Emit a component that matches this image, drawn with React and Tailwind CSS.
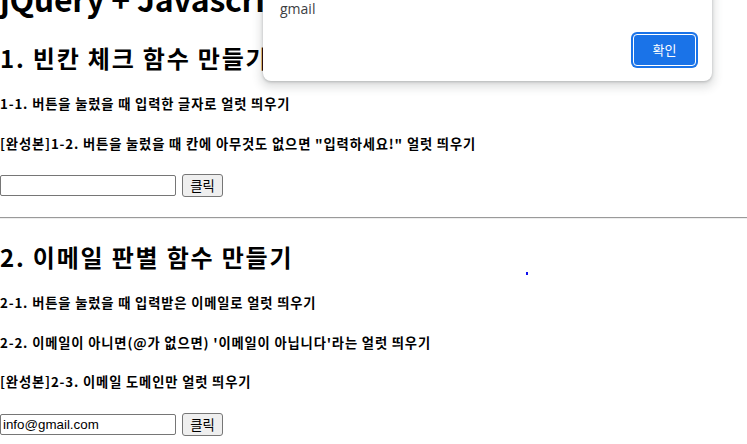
import React from "react";

const kr = { fontFamily: '"Noto Sans CJK KR", "Noto Sans", sans-serif' };

function H5({ children, className = "" }) {
  return (
    <h5 className={"text-[13.28px] leading-[18px] font-bold tracking-[0.85px] text-black whitespace-nowrap " + className}>
      {children}
    </h5>
  );
}

function InputRow({ value, className = "" }) {
  return (
    <div className={"flex items-center gap-[6px] h-[23px] " + className}>
      <input
        readOnly
        value={value}
        className="w-[176px] h-[21px] border border-[#767676] rounded-[2px] px-[2px] text-[13.33px] text-black outline-none bg-white"
        style={{ fontFamily: '"Liberation Sans", Arial, sans-serif' }}
      />
      <button className="h-[23px] w-[41px] bg-[#efefef] border border-[#767676] rounded-[3px] text-[13.33px] text-black flex items-center justify-center">
        클릭
      </button>
    </div>
  );
}

export default function App() {
  return (
    <div className="relative w-[747px] h-[444px] overflow-hidden bg-white" style={kr}>
      <div className="flex flex-col">
        <h1 className="text-[32px] leading-[32px] font-bold tracking-[-0.3px] mt-[-18px] whitespace-nowrap">jQuery + Javascript 연습하기</h1>
        <h2 className="text-[24px] leading-[32px] font-bold tracking-[1.8px] mt-[28px] whitespace-nowrap">1. 빈칸 체크 함수 만들기</h2>
        <H5 className="mt-[21px]">1-1. 버튼을 눌렀을 때 입력한 글자로 얼럿 띄우기</H5>
        <H5 className="mt-[22px]">[완성본]1-2. 버튼을 눌렀을 때 칸에 아무것도 없으면 "입력하세요!" 얼럿 띄우기</H5>
        <InputRow value="" className="mt-[21px]" />
        <hr className="mt-[20px] border-0 border-t border-t-[#9a9a9a] border-b border-b-[#eeeeee]" />
        <h2 className="text-[24px] leading-[32px] font-bold tracking-[1.8px] mt-[22px] whitespace-nowrap">2. 이메일 판별 함수 만들기</h2>
        <H5 className="mt-[21px]">2-1. 버튼을 눌렀을 때 입력받은 이메일로 얼럿 띄우기</H5>
        <H5 className="mt-[22px]">2-2. 이메일이 아니면(@가 없으면) '이메일이 아닙니다'라는 얼럿 띄우기</H5>
        <H5 className="mt-[21px]">[완성본]2-3. 이메일 도메인만 얼럿 띄우기</H5>
        <InputRow value="info@gmail.com" className="mt-[22px]" />
      </div>

      <span className="absolute left-[526px] top-[272px] w-[2px] h-[3px] bg-[#1010ee]" />

      <div className="absolute left-[263px] top-[-40px] w-[449px] h-[121px] bg-white rounded-b-[8px] shadow-[0_1px_3px_rgba(60,64,67,0.3),0_4px_8px_3px_rgba(60,64,67,0.15)]">
        <div
          className="absolute left-[17px] top-[40px] text-[14px] leading-[18px] text-[#3c4043]"
          style={{ fontFamily: '"Open Sans", "Noto Sans", sans-serif' }}
        >
          gmail
        </div>
        <button className="absolute left-[370px] top-[74px] w-[63px] h-[32px] bg-[#1a73e8] border border-white rounded-[4px] shadow-[0_0_0_2px_#1a73e8] text-white text-[13px] flex items-center justify-center">
          확인
        </button>
      </div>
    </div>
  );
}
